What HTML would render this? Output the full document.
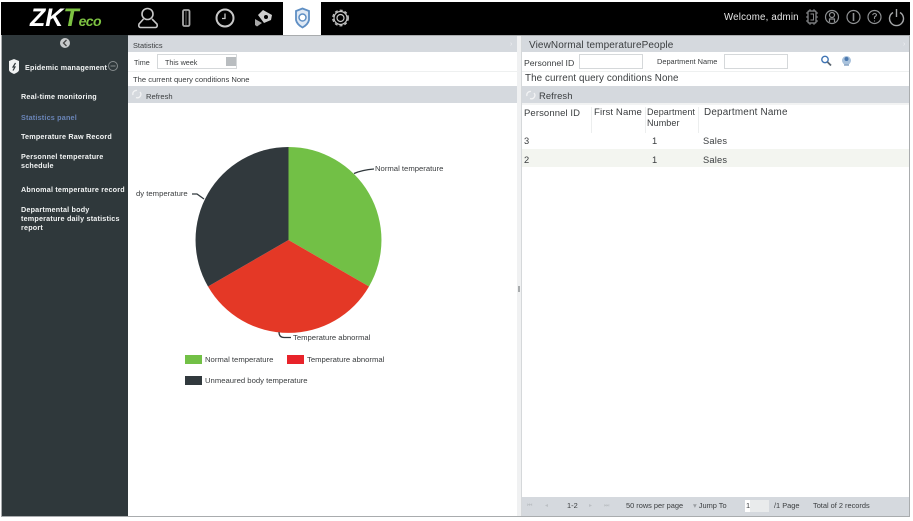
<!DOCTYPE html>
<html><head><meta charset="utf-8">
<style>
html,body{margin:0;padding:0;background:#fff}
body{width:913px;height:521px;position:relative;overflow:hidden;font-family:"Liberation Sans",sans-serif;color:#333}
.a{position:absolute}
.t{position:absolute;white-space:nowrap;line-height:1;color:#3a3d3f}
.s{position:absolute;color:#f2f4f4;font-weight:bold;font-size:7.2px;line-height:9px;letter-spacing:.2px}
.inp{position:absolute;background:#fff;border:1px solid #d5d8da;box-sizing:border-box}
.v{position:absolute;width:1px;background:#eceeee}
</style></head>
<body>
<!-- frame -->
<div class="a" style="left:1px;top:35px;width:909px;height:482px;background:#a9acae"></div>
<div class="a" style="left:128px;top:36px;width:781px;height:480px;background:#fff"></div>
<!-- top bar -->
<div class="a" style="left:1px;top:2px;width:909px;height:33px;background:#000"></div>
<div class="a" style="left:283px;top:2px;width:38px;height:33px;background:#fff"></div>
<!-- logo -->
<div class="t" style="left:30px;top:6px;font-size:25px;font-weight:bold;font-style:italic;color:#fff;line-height:25px">ZK<span style="color:#7dc242">T</span><span style="color:#7dc242;font-size:14px;letter-spacing:-.6px">eco</span></div>
<!-- nav icons -->
<svg class="a" style="left:130px;top:2px" width="230" height="33" viewBox="0 0 230 33" fill="none" stroke="#c8c8c8" stroke-width="1.600">
 <circle cx="17.500" cy="12" r="5.500"/><path d="M13.500 17 L9 22 Q8 25.500 11 25.500 H25 Q28 25.500 27 22 L22 17"/>
 <rect x="53" y="8" width="6.500" height="16" rx="1.500" stroke="#a8a8a8" stroke-width="1.800"/><path d="M56 9 V23" stroke="#444" stroke-width="1.500"/>
 <circle cx="95" cy="16" r="8.500" stroke-width="2"/><path d="M95 11.500 V16.500 H92" stroke-width="1.300"/>
 <path d="M128 13 L133 8 L142 13 L141 18 L134 21 Z" fill="#cfcfcf" stroke="none"/><path d="M125 17 L132 21 L127 24.500 L125 23 Z" fill="#a8a8a8" stroke="none"/><circle cx="136" cy="15" r="2" fill="#000" stroke="none"/>
 <path d="M172.500 6.500 L166 9 V18 Q167 22.500 172.500 25.500 Q178 22.500 179 18 V9 Z" stroke="#5f8fc4" stroke-width="1.800" fill="#dfe9f5"/>
 <circle cx="172.500" cy="15.500" r="3.500" stroke="#5f8fc4" stroke-width="1.500" fill="#fff"/>
 <circle cx="210.500" cy="16" r="3.500" stroke-width="1.200"/><circle cx="210.500" cy="16" r="6.500" stroke-width="1.200"/><circle cx="210.500" cy="16" r="7.800" stroke-width="1.200" stroke-dasharray="3 2.100"/>
</svg>
<!-- header right -->
<div class="t" style="left:724px;top:13px;font-size:9.700px;line-height:10px;color:#e8e8e8;letter-spacing:.2px">Welcome, admin</div>
<svg class="a" style="left:800px;top:1px" width="110" height="33" viewBox="0 0 110 33" fill="none" stroke="#8e9092" stroke-width="1.200">
 <rect x="8" y="10" width="8" height="12" rx="1"/><path d="M6 12h2M6 16h2M6 20h2M16 12h2M16 16h2M16 20h2M10 8v2M14 8v2M10 22v2M14 22v2M10.500 13h3v6h-3" stroke-width=".9"/>
 <circle cx="32" cy="16" r="6.500"/><circle cx="32" cy="14" r="2.500"/><path d="M29.500 21 V18 H34.500 V21"/>
 <circle cx="53.500" cy="16" r="6.500"/><path d="M53.500 12 V20" stroke-width="1.600"/>
 <circle cx="74.500" cy="16" r="6.500"/><path d="M72.500 14 Q74.500 11 76.500 13.500 Q76.500 15 74.500 16 V18 M74.500 19.500 V20.500" stroke-width="1.100"/>
 <path d="M93 11.500 A7 7 0 1 0 100 11.500 M96.500 8 V16" stroke="#a4a6a8" stroke-width="1.400"/>
</svg>
<!-- sidebar -->
<div class="a" style="left:2px;top:35px;width:126px;height:481px;background:#2f383b"></div>
<svg class="a" style="left:58px;top:36px" width="14" height="14" viewBox="0 0 14 14">
 <circle cx="7" cy="7" r="5" fill="#c7cacb"/><path d="M8.500 4 L5.500 7 L8.500 10" fill="none" stroke="#444" stroke-width="1.300"/>
</svg>
<svg class="a" style="left:7px;top:58px" width="14" height="17" viewBox="0 0 14 17">
 <path d="M2 3 L7 1 L12 3 V12 Q12 14 7 16 Q2 14 2 12 Z" fill="#f0f2f2"/><path d="M8.500 5 L6 9 H8 L6 12.500" fill="none" stroke="#2f383b" stroke-width="1.200"/>
</svg>
<div class="s" style="left:25px;top:63px">Epidemic management</div>
<svg class="a" style="left:107px;top:60px" width="12" height="12" viewBox="0 0 12 12"><circle cx="6" cy="6" r="4.500" fill="none" stroke="#868c8e"/><path d="M3.500 6H8.500" stroke="#868c8e"/></svg>
<div class="s" style="left:21px;top:92px">Real-time monitoring</div>
<div class="s" style="left:21px;top:113px;color:#6a85b8">Statistics panel</div>
<div class="s" style="left:21px;top:132px">Temperature Raw Record</div>
<div class="s" style="left:21px;top:152px;width:100px">Personnel temperature schedule</div>
<div class="s" style="left:21px;top:185px;white-space:nowrap;letter-spacing:.2px">Abnomal temperature record</div>
<div class="s" style="left:21px;top:205px;width:104px">Departmental body temperature daily statistics report</div>
<!-- left panel -->
<div class="a" style="left:128px;top:36px;width:389px;height:16px;background:#d5d9de"></div>
<div class="t" style="left:133px;top:42px;font-size:7.400px">Statistics</div>
<div class="t" style="left:510px;top:41px;font-size:7px;color:#eef0f2">›</div>
<div class="t" style="left:134px;top:59px;font-size:7.200px">Time</div>
<div class="inp" style="left:157px;top:54px;width:80px;height:15px"></div>
<div class="a" style="left:226px;top:57px;width:10px;height:9px;background:#b9bdc0"></div>
<div class="t" style="left:165px;top:59px;font-size:7.200px">This week</div>
<div class="a" style="left:128px;top:71px;width:389px;height:1px;background:#eef0f0"></div>
<div class="t" style="left:133px;top:76px;font-size:7.600px">The current query conditions None</div>
<div class="a" style="left:128px;top:86px;width:389px;height:17px;background:#d5d9de"></div>
<svg class="a" style="left:131px;top:89px" width="11" height="10" viewBox="0 0 11 10"><path d="M2 6 A3.500 3.500 0 0 1 6 1.500 M9 3 A3.500 3.500 0 0 1 5 8.500" fill="none" stroke="#f2f3f4" stroke-width="1.300"/></svg>
<div class="t" style="left:146px;top:93px;font-size:7.600px">Refresh</div>
<!-- pie -->
<svg class="a" style="left:128px;top:104px" width="389" height="290" viewBox="128 104 389 290">
 <path d="M288.500 240 V147 A93 93 0 0 1 369 286.500 Z" fill="#72c046"/>
 <path d="M288.500 240 L369 286.500 A93 93 0 0 1 208 286.500 Z" fill="#e43826"/>
 <path d="M288.500 240 L208 286.500 A93 93 0 0 1 288.500 147 Z" fill="#31393d"/>
 <g fill="none" stroke="#31393d" stroke-width="1.300">
  <path d="M354 173.500 Q362 170 374 169"/>
  <path d="M192 194 H197 L204 199"/>
  <path d="M279 332 Q279 337.500 284 337.500 H291"/>
 </g>
 <rect x="185" y="355" width="17" height="9" fill="#72c046"/>
 <rect x="287" y="355" width="17" height="9" fill="#e8232a"/>
 <rect x="185" y="376" width="17" height="9" fill="#31393d"/>
</svg>
<div class="t" style="left:375px;top:165px;font-size:7.700px">Normal temperature</div>
<div class="t" style="left:136px;top:190px;font-size:7.700px">dy temperature</div>
<div class="t" style="left:293px;top:334px;font-size:7.700px">Temperature abnormal</div>
<div class="t" style="left:205px;top:356px;font-size:7.700px">Normal temperature</div>
<div class="t" style="left:307px;top:356px;font-size:7.700px">Temperature abnormal</div>
<div class="t" style="left:205px;top:377px;font-size:7.700px">Unmeaured body temperature</div>
<!-- splitter -->
<div class="a" style="left:517px;top:36px;width:5px;height:480px;background:#f0f1f2"></div>
<div class="a" style="left:521px;top:36px;width:1px;height:480px;background:#d5d8da"></div>
<div class="a" style="left:518px;top:286px;width:2px;height:6px;background:#a8abad"></div>
<!-- right panel -->
<div class="a" style="left:522px;top:36px;width:387px;height:16px;background:#d5d9de"></div>
<div class="t" style="left:529px;top:41px;font-size:10px;letter-spacing:.1px">ViewNormal temperaturePeople</div>
<div class="t" style="left:903px;top:41px;font-size:7px;color:#eef0f2">›</div>
<div class="t" style="left:524px;top:59px;font-size:8.700px">Personnel ID</div>
<div class="inp" style="left:579px;top:54px;width:64px;height:15px"></div>
<div class="t" style="left:657px;top:58px;font-size:7.400px">Department Name</div>
<div class="inp" style="left:724px;top:54px;width:64px;height:15px"></div>
<svg class="a" style="left:820px;top:54px" width="32" height="14" viewBox="0 0 32 14">
 <circle cx="5" cy="5.500" r="3.200" fill="none" stroke="#3f74b4" stroke-width="1.400"/><path d="M7.500 8 L11 11.500" stroke="#5a6670" stroke-width="1.800"/>
 <circle cx="26.500" cy="6.500" r="4.500" fill="#a9c2dc"/><circle cx="26.500" cy="5" r="2" fill="#4a78ae"/><path d="M24 11 H29" stroke="#8aa6c4" stroke-width="1.500"/>
</svg>
<div class="a" style="left:522px;top:71px;width:387px;height:1px;background:#eef0f0"></div>
<div class="t" style="left:525px;top:74px;font-size:9.800px;letter-spacing:.1px">The current query conditions None</div>
<div class="a" style="left:522px;top:86px;width:387px;height:17px;background:#d5d9de"></div>
<svg class="a" style="left:525px;top:90px" width="11" height="10" viewBox="0 0 11 10"><path d="M2 6 A3.500 3.500 0 0 1 6 1.500 M9 3 A3.500 3.500 0 0 1 5 8.500" fill="none" stroke="#f2f3f4" stroke-width="1.300"/></svg>
<div class="t" style="left:539px;top:91px;font-size:9.400px;letter-spacing:.1px">Refresh</div>
<!-- table -->
<div class="a" style="left:522px;top:103px;width:387px;height:2px;background:#f2f3f3"></div>
<div class="v" style="left:591px;top:107px;height:26px"></div>
<div class="v" style="left:645px;top:107px;height:26px"></div>
<div class="v" style="left:698px;top:107px;height:26px"></div>
<div class="t" style="left:524px;top:109px;font-size:9.500px;letter-spacing:.1px">Personnel ID</div>
<div class="t" style="left:594px;top:108px;font-size:9.600px;letter-spacing:.1px">First Name</div>
<div class="t" style="left:647px;top:108px;font-size:9px;letter-spacing:.1px">Department</div>
<div class="t" style="left:647px;top:119px;font-size:9px;letter-spacing:.1px">Number</div>
<div class="t" style="left:704px;top:108px;font-size:9.900px;letter-spacing:.2px">Department Name</div>
<div class="a" style="left:522px;top:149px;width:387px;height:18px;background:#f3f5f0"></div>
<div class="t" style="left:524px;top:137px;font-size:9.300px">3</div>
<div class="t" style="left:652px;top:137px;font-size:9.300px">1</div>
<div class="t" style="left:703px;top:137px;font-size:9.300px;letter-spacing:.2px">Sales</div>
<div class="t" style="left:524px;top:156px;font-size:9.300px">2</div>
<div class="t" style="left:652px;top:156px;font-size:9.300px">1</div>
<div class="t" style="left:703px;top:156px;font-size:9.300px;letter-spacing:.2px">Sales</div>
<!-- footer -->
<div class="a" style="left:522px;top:497px;width:387px;height:19px;background:#d5d9de"></div>
<div class="t" style="left:527px;top:503px;font-size:6px;color:#bcc0c4">⏮</div>
<div class="t" style="left:545px;top:503px;font-size:6px;color:#bcc0c4">◂</div>
<div class="t" style="left:567px;top:502px;font-size:7.400px">1-2</div>
<div class="t" style="left:589px;top:503px;font-size:6px;color:#bcc0c4">▸</div>
<div class="t" style="left:604px;top:503px;font-size:6px;color:#bcc0c4">⏭</div>
<div class="t" style="left:626px;top:502px;font-size:7.400px">50 rows per page</div>
<div class="t" style="left:693px;top:502px;font-size:7.400px"><span style="color:#9a9ea2">▾</span> Jump To</div>
<div class="a" style="left:745px;top:500px;width:24px;height:12px;background:#e9ebec"></div>
<div class="a" style="left:745px;top:500px;width:5px;height:12px;background:#fff"></div>
<div class="t" style="left:746px;top:502px;font-size:7.400px">1</div>
<div class="t" style="left:774px;top:502px;font-size:7.400px">/1 Page</div>
<div class="t" style="left:813px;top:502px;font-size:7.400px">Total of 2 records</div>
</body></html>
